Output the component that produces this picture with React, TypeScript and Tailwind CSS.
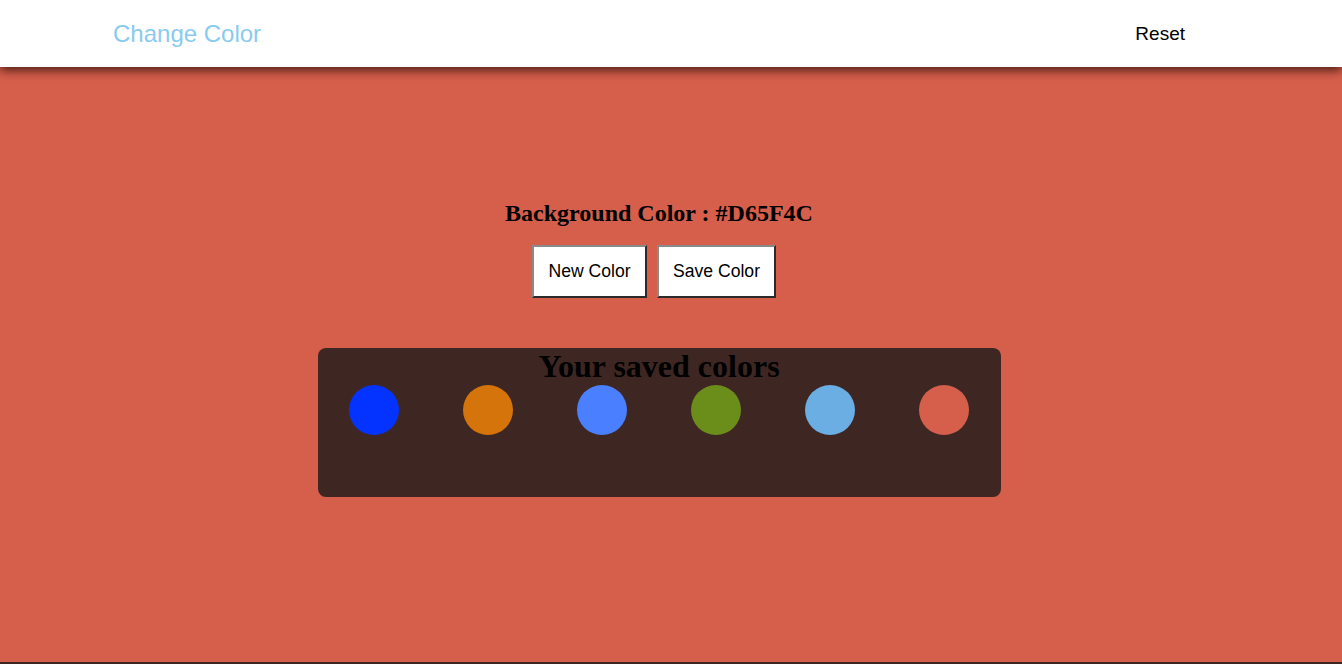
const savedColors = ["#0433FF", "#D4740A", "#4A80FF", "#6B8E1A", "#6AAEE4", "#D65F4C"];

const App = () => {
  const current = "#D65F4C";

  return (
    <div className="w-full h-[664px] overflow-hidden bg-[#D65F4C] font-['Liberation_Sans',Arial,sans-serif]">
      <header className="relative z-10 h-[67px] bg-white flex items-center justify-between pl-[113px] pr-[157px] shadow-[0_3px_10px_rgba(40,10,5,0.85)]">
        <span className="text-[24px] text-[#89CBF0] leading-none">Change Color</span>
        <button className="text-[19px] text-black leading-none">Reset</button>
      </header>

      <main className="h-[595px] w-[1318px] flex flex-col items-center pt-[132px]">
        <h2 className="font-['Liberation_Serif','Times_New_Roman',serif] font-bold text-[24px] text-black leading-[28px]">
          Background Color : {current}
        </h2>

        <div className="flex gap-[10px] mt-[18px] pr-[10px]">
          <button className="h-[53px] w-[115px] bg-white text-[17.6px] text-black border-2 border-t-[#8a8a8a] border-l-[#8a8a8a] border-r-[#2a2a2a] border-b-[#2a2a2a]">
            New Color
          </button>
          <button className="h-[53px] w-[119px] bg-white text-[17.6px] text-black border-2 border-t-[#8a8a8a] border-l-[#8a8a8a] border-r-[#2a2a2a] border-b-[#2a2a2a]">
            Save Color
          </button>
        </div>

        <section className="mt-[50px] w-[683px] h-[149px] bg-[#3E2723] rounded-lg flex flex-col">
          <h1 className="font-['Liberation_Serif','Times_New_Roman',serif] font-bold text-[32px] text-black text-center leading-[37px]">
            Your saved colors
          </h1>
          <div className="flex justify-around">
            {savedColors.map((c) => (
              <div key={c} className="w-[50px] h-[50px] rounded-full" style={{ backgroundColor: c }} />
            ))}
          </div>
        </section>
      </main>

      <div className="h-[2px] bg-[#3E2723]" />
    </div>
  );
};

export default App;
